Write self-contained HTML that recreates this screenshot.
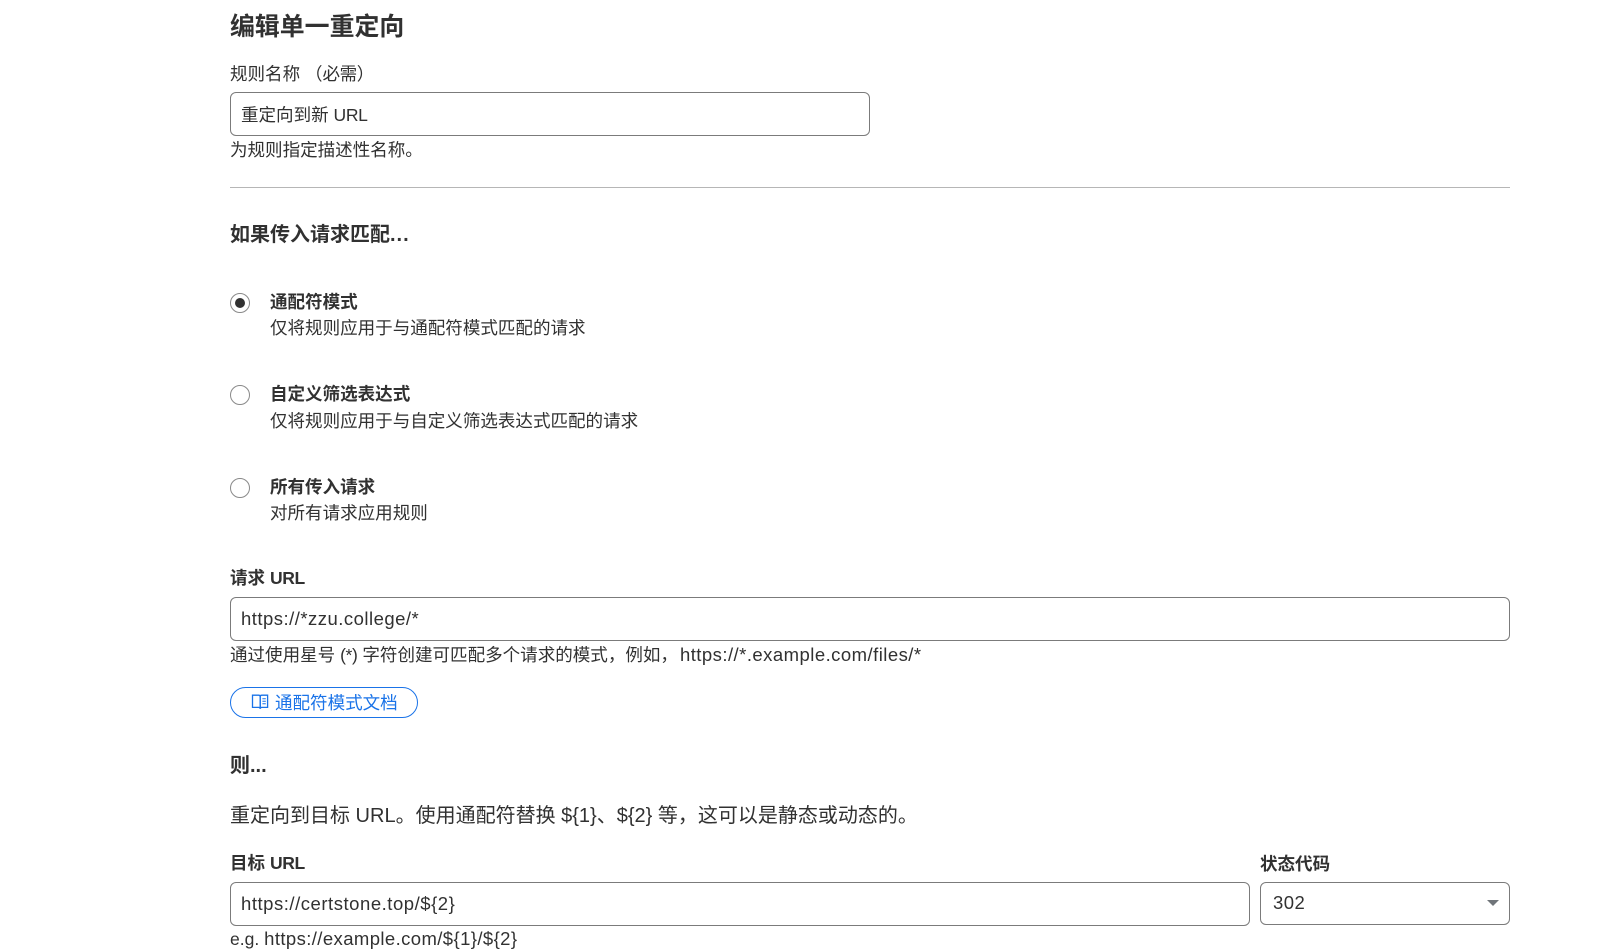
<!DOCTYPE html>
<html lang="zh-CN">
<head>
<meta charset="utf-8">
<title>编辑单一重定向</title>
<style>
html,body{margin:0;padding:0;background:#fff;}
body{position:relative;width:1603px;height:950px;overflow:hidden;color:#313131;font-family:"Liberation Sans","Noto Sans CJK SC",sans-serif;font-size:17.55px;}
.t{position:absolute;white-space:nowrap;line-height:26px;height:26px;}
.b{font-weight:700;}
.box{position:absolute;box-sizing:border-box;border:1px solid #7b7b7b;border-radius:6px;background:#fff;}
.r{position:absolute;left:230px;width:20px;height:20px;box-sizing:border-box;border:1.3px solid #8a8a8a;border-radius:50%;background:#fff;}
.r i{position:absolute;left:3.7px;top:3.7px;width:10px;height:10px;border-radius:50%;background:#313131;}
.u{letter-spacing:-.35px;}
.v{font-size:18.5px;letter-spacing:.48px;}
</style>
</head>
<body>
<div class="t b" style="left:230px;top:14px;font-size:24.9px;">编辑单一重定向</div>
<div class="t" style="left:230px;top:61px;">规则名称 （<span style="letter-spacing:-.4px;">必需</span>）</div>
<div class="box" style="left:230px;top:92px;width:640px;height:44px;"></div>
<div class="t" style="left:241px;top:102px;">重定向到新 <span class="u">URL</span></div>
<div class="t" style="left:230px;top:137px;">为规则指定描述性名称。</div>
<div style="position:absolute;left:230px;top:187px;width:1280px;height:1px;background:#b6b6b6;"></div>
<div class="t b" style="left:230px;top:222px;font-size:20px;">如果传入请求匹配<span style="letter-spacing:1px;">...</span></div>

<div class="r" style="top:293px;"><i></i></div>
<div class="t b" style="left:270px;top:289px;">通配符模式</div>
<div class="t" style="left:270px;top:315px;">仅将规则应用于与通配符模式匹配的请求</div>

<div class="r" style="top:385px;"></div>
<div class="t b" style="left:270px;top:381px;">自定义筛选表达式</div>
<div class="t" style="left:270px;top:408px;">仅将规则应用于与自定义筛选表达式匹配的请求</div>

<div class="r" style="top:478px;"></div>
<div class="t b" style="left:270px;top:474px;">所有传入请求</div>
<div class="t" style="left:270px;top:500px;">对所有请求应用规则</div>

<div class="t b" style="left:230px;top:565px;">请求 <span class="u">URL</span></div>
<div class="box" style="left:230px;top:597px;width:1280px;height:44px;"></div>
<div class="t v" style="left:241px;top:606px;">https://*zzu.college/*</div>
<div class="t" style="left:230px;top:642px;">通过使用星号 <span class="u">(*)</span> 字符创建可匹配多个请求的模式，例如，<span class="v" style="letter-spacing:.46px;margin-left:2px;">https://*.example.com/files/*</span></div>

<div style="position:absolute;left:230px;top:687px;width:188px;height:31px;box-sizing:border-box;border:1.4px solid #1a73e8;border-radius:15.5px;background:#fff;"></div>
<svg style="position:absolute;left:251px;top:694px;" width="18" height="16" viewBox="0 0 18 16" fill="none" stroke="#1a73e8" stroke-width="1.3">
<path d="M1.5 1.2H7.6C8.6 1.2 9.2 1.8 9.2 2.7V14.8C9.2 14 8.6 13.4 7.6 13.4H1.5Z"/>
<path d="M16.6 1.2H10.8C9.8 1.2 9.2 1.8 9.2 2.7V14.8C9.2 14 9.8 13.4 10.8 13.4H16.6Z"/>
<path d="M11.4 4.7H14.8M11.4 7.2H14.8M11.4 9.7H14.8" stroke-width="1"/>
</svg>
<div class="t" style="left:275px;top:690px;color:#1a73e8;">通配符模式文档</div>

<div class="t b" style="left:230px;top:753px;font-size:20px;">则...</div>
<div class="t" style="left:230px;top:803px;font-size:20px;">重定向到目标 URL。使用通配符替换 ${1}、${2} 等，这可以是静态或动态的。</div>

<div class="t b" style="left:230px;top:850px;">目标 <span class="u">URL</span></div>
<div class="t b" style="left:1260px;top:851px;">状态代码</div>
<div class="box" style="left:230px;top:882px;width:1020px;height:44px;"></div>
<div class="t v" style="left:241px;top:891px;letter-spacing:.53px;">https://certstone.top/${2}</div>
<div class="box" style="left:1260px;top:882px;width:250px;height:43px;"></div>
<div class="t v" style="left:1273px;top:890px;">302</div>
<div style="position:absolute;left:1487px;top:900px;width:0;height:0;border-left:6px solid transparent;border-right:6px solid transparent;border-top:6px solid #70757a;"></div>
<div class="t" style="left:230px;top:926px;">e.g. <span class="v" style="letter-spacing:.4px;">https://example.com/${1}/${2}</span></div>
</body>
</html>
